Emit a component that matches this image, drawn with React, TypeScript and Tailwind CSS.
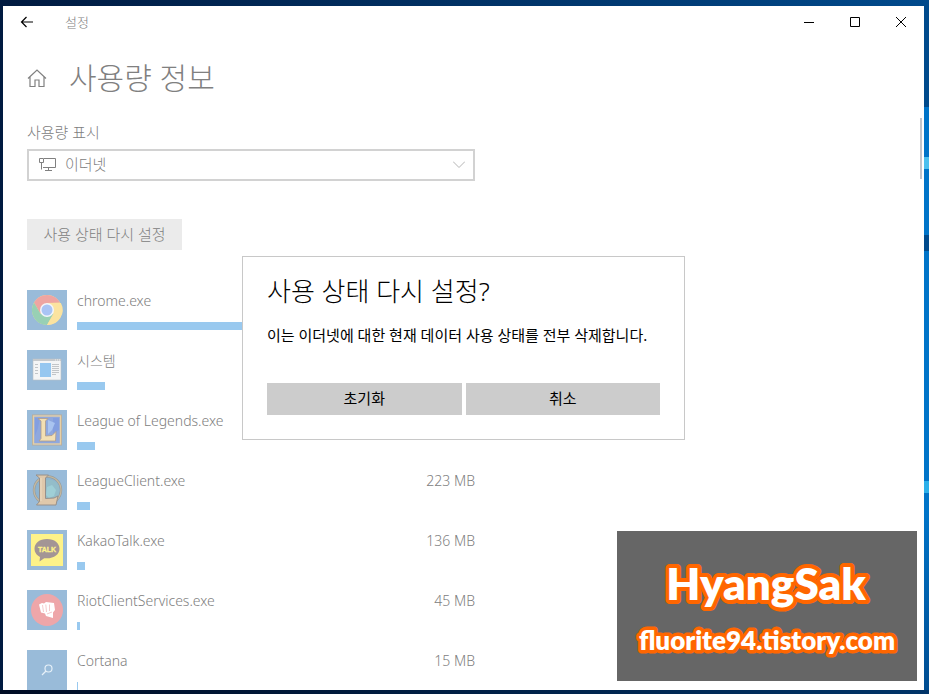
import type { ReactNode } from "react";

type Usage = {
    name: string;
    amount: string;
    width: number;
    icon: ReactNode;
};

function ChromeIcon() {
    return (
        <svg viewBox="0 0 40 40" className="size-10" aria-hidden="true">
            <circle cx="20" cy="20" r="15" fill="#f6dd9c" />
            <path d="M7 12.5A15 15 0 0 1 33 12.5L20 13L13.5 23.7Z" fill="#eea5a2" />
            <path d="M7 12.5A15 15 0 0 0 20 35L26.5 23.7L13.5 23.7Z" fill="#98d0b4" />
            <path d="M20 35A15 15 0 0 0 33.9 13H20L26.5 23.7Z" fill="#fbe3a0" />
            <circle cx="20" cy="20" r="7" fill="#f3f6fb" />
            <circle cx="20" cy="20" r="5.5" fill="#a9c4f5" />
        </svg>
    );
}

function SystemIcon() {
    return (
        <svg viewBox="0 0 40 40" className="size-10" aria-hidden="true">
            <rect x="6" y="9" width="28" height="21" fill="#f4f5f6" stroke="#b9c0c6" strokeWidth=".6" />
            <path d="M6 10H34" stroke="#c6c9cc" strokeWidth="2" />
            <path d="M28 10H33" stroke="#eef0f2" strokeWidth="1" strokeDasharray="1 1" />
            <rect x="13" y="13" width="11" height="14" fill="#96c7f0" />
            <path d="M8 14.5H11M8 17.5H11M8 20.5H11M8 23.5H11M25 14.5H32M25 16.5H32M25 18.5H32M25 20.5H32M25 22.5H32M25 24.5H29" stroke="#b5b9bd" strokeWidth=".8" />
        </svg>
    );
}

function LegendsIcon() {
    return (
        <svg viewBox="0 0 40 40" className="size-10" aria-hidden="true">
            <rect x="5.5" y="5" width="29" height="30" fill="#8fa8de" stroke="#b5ab9b" strokeWidth="1" />
            <rect x="6.5" y="6" width="27" height="28" fill="none" stroke="#e6d0a6" strokeWidth="1.4" />
            <path d="M8 8h5l-2 10-3 8zM26 8h6v12l-6 4z" fill="#839fe0" />
            <path d="M21 10l7 3-3 7-4 4z" fill="#a9c4f0" />
            <path d="M11 8.5H21L18.5 11V26L25 25.5L29 21.5L28.5 31H12L14 28.5V11Z" fill="#f2dfb3" stroke="#b09c8a" strokeWidth=".8" />
        </svg>
    );
}

function ClientIcon() {
    return (
        <svg viewBox="0 0 40 40" className="size-10" aria-hidden="true">
            <circle cx="20.5" cy="20" r="13.5" fill="#8fb4cf" stroke="#979c9c" strokeWidth="2.4" />
            <circle cx="20.5" cy="20" r="13.5" fill="none" stroke="#c5b99f" strokeWidth="1.2" />
            <circle cx="22" cy="20" r="10.5" fill="#93bdc9" />
            <path d="M20 17l5-2 4 5-2 6-5 2-3-3z" fill="#9fcfd6" />
            <path d="M9 5H21.5L18.5 8V28.5L27 28L31 26L29 35H9.5L12.5 31.5V8Z" fill="#dfc8ab" stroke="#96908b" strokeWidth="1" />
            <path d="M14 8V31" stroke="#ecdcc2" strokeWidth="1" />
        </svg>
    );
}

function TalkIcon() {
    return (
        <svg viewBox="0 0 40 40" className="size-10" aria-hidden="true">
            <rect x="4" y="4" width="32" height="32" fill="#fdf289" />
            <path d="M20 9C12.5 9 7.5 13.2 7.5 18.8C7.5 22.5 10 25.5 13 27L12.500 31.5L17.2 28.2C26 29.3 32.5 25 32.5 18.8C32.5 13.2 27.5 9 20 9Z" fill="#a39595" />
            <text x="20" y="21.5" textAnchor="middle" fontSize="7" fontWeight="700" fontFamily="Liberation Sans, sans-serif" fill="#fdf289" stroke="#fdf289" strokeWidth=".3">TALK</text>
        </svg>
    );
}

function RiotIcon() {
    return (
        <svg viewBox="0 0 40 40" className="size-10" aria-hidden="true">
            <circle cx="20" cy="20" r="16" fill="#eea6a9" />
            <path d="M12 14.5L15 13L17 13.5L19 12L27 13L28 20L26 22.5V28L19 26L18 23.5L14 22.5Z" fill="#fff" />
            <path d="M15.5 15L16.5 22M18.8 14.500L19.5 22M22.5 14.5V21M20 24L25 22" stroke="#eea6a9" strokeWidth=".6" fill="none" />
        </svg>
    );
}

function CortanaIcon() {
    return (
        <svg viewBox="0 0 40 40" className="size-10" aria-hidden="true" fill="none" stroke="#e6f0f8" strokeWidth="1.2">
            <circle cx="21.5" cy="18.5" r="3.5" />
            <path d="M19 21L15 25" />
        </svg>
    );
}

const usages: Usage[] = [
    { name: "chrome.exe", amount: "", width: 397, icon: <ChromeIcon /> },
    { name: "시스템", amount: "", width: 28, icon: <SystemIcon /> },
    { name: "League of Legends.exe", amount: "", width: 18, icon: <LegendsIcon /> },
    { name: "LeagueClient.exe", amount: "223 MB", width: 13, icon: <ClientIcon /> },
    { name: "KakaoTalk.exe", amount: "136 MB", width: 8, icon: <TalkIcon /> },
    { name: "RiotClientServices.exe", amount: "45 MB", width: 3, icon: <RiotIcon /> },
    { name: "Cortana", amount: "15 MB", width: 1, icon: <CortanaIcon /> },
];

function TitleBar() {
    return (
        <header className="flex h-8 items-center text-black">
            <button aria-label="뒤로" className="flex h-8 w-12 items-center justify-center">
                <svg viewBox="0 0 14 12" className="h-3 w-3.5" fill="none" stroke="currentColor" strokeWidth="1.2" aria-hidden="true">
                    <path d="M13 6H1.5M6.5 1L1.5 6L6.5 11" />
                </svg>
            </button>
            <span className="ml-3.5 flex-1 text-[13px] font-light text-[#808080]">설정</span>
            <button aria-label="최소화" className="flex h-8 w-[46px] items-center justify-center">
                <svg viewBox="0 0 10 10" className="size-2.5" stroke="currentColor" aria-hidden="true"><path d="M0 5.5H10" /></svg>
            </button>
            <button aria-label="최대화" className="flex h-8 w-[46px] items-center justify-center">
                <svg viewBox="0 0 10 10" className="size-2.5" fill="none" stroke="currentColor" aria-hidden="true"><path d="M.5.5H9.5V9.5H.5Z" /></svg>
            </button>
            <button aria-label="닫기" className="flex h-8 w-[46px] items-center justify-center">
                <svg viewBox="0 0 10 10" className="size-2.5" stroke="currentColor" aria-hidden="true"><path d="M0 0L10 10M10 0L0 10" /></svg>
            </button>
        </header>
    );
}

function UsageRow({ name, amount, width, icon }: Usage) {
    return (
        <li className="flex h-10 gap-2.5">
            <div className="size-10 shrink-0 bg-[#99bbd9]">{icon}</div>
            <div className="flex flex-1 flex-col justify-between">
                <div className="flex justify-between leading-[22px]">
                    <span>{name}</span>
                    <span>{amount}</span>
                </div>
                <div className="h-2 bg-[#99c9ef]" style={{ width }} />
            </div>
        </li>
    );
}

function ResetDialog() {
    return (
        <div role="dialog" aria-labelledby="reset-title" className="absolute inset-x-0 top-[250px] mx-auto w-[443px] border border-[#c8c8c8] bg-white px-6 pt-4 pb-6 font-normal text-black">
            <h2 id="reset-title" className="text-[26px] leading-9 font-light">사용 상태 다시 설정?</h2>
            <p className="mt-3.5 text-[15px] leading-6 whitespace-nowrap">이는 이더넷에 대한 현재 데이터 사용 상태를 전부 삭제합니다.</p>
            <div className="mt-9 grid grid-cols-2 gap-1">
                <button className="h-8 bg-[#ccc] text-[15px]">초기화</button>
                <button className="h-8 bg-[#ccc] text-[15px]">취소</button>
            </div>
        </div>
    );
}

function Watermark() {
    return (
        <div className="absolute right-3 bottom-[13px] bg-[#666]">
            <svg viewBox="0 0 300 150" className="h-[150px] w-[300px]" fontFamily="Lato, sans-serif" fontWeight="800" textAnchor="middle" fill="#fff" stroke="#ff6600" strokeLinejoin="round" paintOrder="stroke">
                <text x="149" y="69" fontSize="44" strokeWidth="8">HyangSak</text>
                <text x="150" y="119" fontSize="26" strokeWidth="7">fluorite94.tistory.com</text>
            </svg>
        </div>
    );
}

// desktop wallpaper showing past the right edge of the window
function WallpaperEdge() {
    return (
        <div className="absolute top-0 right-0 flex h-full w-[5px] flex-col bg-[#0074c8]">
            <div className="h-[107px] bg-[#004a8c]" />
            <div className="mt-[50px] h-3 bg-[#4cc0ee]" />
            <div className="mt-[66px] h-4 bg-[#004a8c]" />
            <div className="mt-[230px] h-3 bg-[#2cb0ea]" />
            <div className="mt-5 flex-1 bg-linear-to-b from-[#0074c8] to-[#004c90]" />
        </div>
    );
}

function App() {
    return (
        <div className="relative h-screen overflow-hidden bg-linear-to-r from-[#001a40] to-[#004a8c] pt-1.5 pr-[5px] pb-1 pl-[3px] font-['Noto_Sans','Noto_Sans_CJK_KR',sans-serif] text-sm font-light">
            <WallpaperEdge />
            <div className="absolute bottom-0 left-0 h-1 w-full bg-linear-to-r from-[#000c24] to-[#003468]" />
            <main className="relative flex h-full flex-col overflow-hidden bg-white text-[#808080]">
                <TitleBar />
                <div className="w-[472px] pl-6">
                    <div className="mt-4 flex h-12 items-center">
                        <svg viewBox="0 0 20 20" className="size-5" fill="none" stroke="currentColor" strokeWidth="1.2" aria-hidden="true">
                            <path d="M1 10.5L10 2L19 10.5M3 9V18.5H8V12H12V18.5H17V9" />
                        </svg>
                        <h1 className="ml-[22px] text-[30px] leading-10">사용량 정보</h1>
                    </div>
                    <label htmlFor="network" className="mt-[18px] block text-[15px] leading-6">사용량 표시</label>
                    <div className="relative mt-[5px]">
                        <select id="network" className="h-8 w-full appearance-none border-2 border-[#d2d2d2] bg-white pl-9 text-[15px]">
                            <option>이더넷</option>
                        </select>
                        <svg viewBox="0 0 18 14" className="pointer-events-none absolute top-[9px] left-3 h-3.5 w-[18px]" fill="none" stroke="currentColor" aria-hidden="true">
                            <path d="M5 .5H16.5V9.5H4M.5.5H4.5V4.5H.5ZM2.5 4.5V11.5M9.5 9.5V12M6 12.5H13" />
                        </svg>
                        <svg viewBox="0 0 12 7" className="pointer-events-none absolute top-3 right-2.5 h-[7px] w-3" fill="none" stroke="#b4b4b4" aria-hidden="true">
                            <path d="M0 .5L6 6.5L12 .5" />
                        </svg>
                    </div>
                    <button className="mt-[38px] block h-[31px] w-[155px] bg-[#ebebeb] text-[15px]">사용 상태 다시 설정</button>
                    <ul className="mt-10 flex flex-col gap-5">
                        {usages.map((usage) => <UsageRow key={usage.name} {...usage} />)}
                    </ul>
                </div>
                <div className="absolute top-28 right-0.5 h-[61px] w-0.5 bg-[#c3c5ca]" />
                <ResetDialog />
            </main>
            <Watermark />
        </div>
    );
}

export default App;
